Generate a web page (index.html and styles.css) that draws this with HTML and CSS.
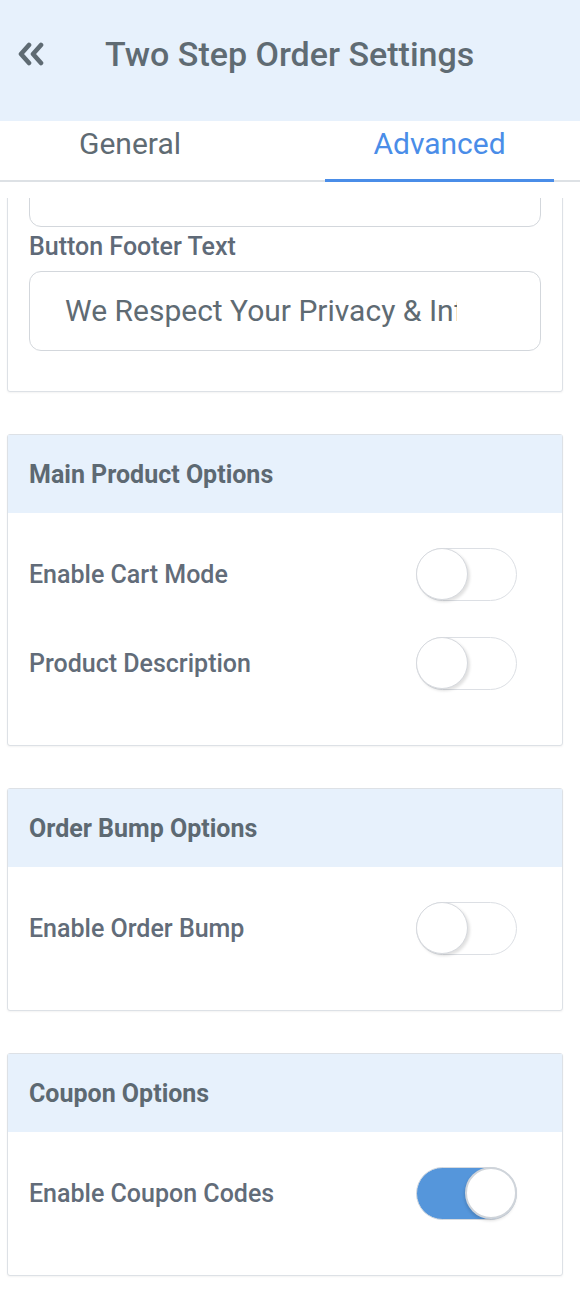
FILE: index.html
```html
<!DOCTYPE html>
<html lang="en">
<head>
<meta charset="utf-8">
<title>Two Step Order Settings</title>
<link rel="stylesheet" href="styles.css">
</head>
<body>
<header class="topbar">
  <svg class="back" viewBox="0 0 28 24" width="28" height="24" aria-hidden="true">
    <polyline points="12,3 4,12 12,21" />
    <polyline points="24,3 16,12 24,21" />
  </svg>
  <h1 class="title">Two Step Order Settings</h1>
</header>
<nav class="tabs">
  <div class="tab">General</div>
  <div class="tab active">Advanced</div>
</nav>
<main class="scroller">
  <section class="card card-first">
    <div class="fields">
      <label class="field-label">Button Text</label>
      <div class="input"><span class="input-text">Place Order Now</span></div>
      <label class="field-label">Button Footer Text</label>
      <div class="input"><span class="input-text">We Respect Your Privacy &amp; Information</span></div>
    </div>
  </section>

  <section class="card">
    <div class="card-head">Main Product Options</div>
    <div class="card-body">
      <div class="row"><span class="row-label">Enable Cart Mode</span><span class="toggle"><span class="knob"></span></span></div>
      <div class="row"><span class="row-label">Product Description</span><span class="toggle"><span class="knob"></span></span></div>
    </div>
  </section>

  <section class="card">
    <div class="card-head">Order Bump Options</div>
    <div class="card-body">
      <div class="row"><span class="row-label">Enable Order Bump</span><span class="toggle"><span class="knob"></span></span></div>
    </div>
  </section>

  <section class="card">
    <div class="card-head">Coupon Options</div>
    <div class="card-body">
      <div class="row"><span class="row-label">Enable Coupon Codes</span><span class="toggle on"><span class="knob"></span></span></div>
    </div>
  </section>
</main>
</body>
</html>
```
FILE: styles.css
```css
* { box-sizing: border-box; }
html, body { margin: 0; padding: 0; }
body {
  width: 580px;
  height: 1294px;
  overflow: hidden;
  background: #ffffff;
  font-family: Roboto, "Liberation Sans", Arial, sans-serif;
  color: #5e6a75;
}

.topbar {
  height: 121px;
  background: #e7f1fc;
  display: flex;
  align-items: center;
  padding-left: 17px;
  padding-bottom: 13px;
}
.back {
  width: 28px;
  height: 24px;
  flex: none;
}
.back polyline {
  fill: none;
  stroke: #5f6b73;
  stroke-width: 4.6;
  stroke-linecap: round;
  stroke-linejoin: round;
}
.title {
  margin: 0 0 0 60px;
  font-size: 34px;
  line-height: 40px;
  font-weight: 500;
  color: #5f6b73;
  white-space: nowrap;
}

.tabs {
  height: 61px;
  display: grid;
  grid-template-columns: 260px 229px;
  column-gap: 65px;
  border-bottom: 2px solid #dde1e5;
}
.tab {
  display: flex;
  align-items: center;
  justify-content: center;
  font-size: 30px;
  line-height: 36px;
  color: #5f6b73;
  padding-bottom: 16px;
  margin-bottom: -2px;
}
.tab.active {
  color: #4a8de8;
  border-bottom: 3px solid #4a8de8;
  padding-bottom: 13px;
}

.scroller {
  margin-top: 16px;
  height: 1097px;
  overflow: hidden;
}

.card {
  margin: 0 17px 42px 7px;
  border: 1px solid #dde1e6;
  border-radius: 3px;
  box-shadow: 0 1px 2px rgba(0, 0, 0, 0.05);
  background: #fff;
}
.card-first {
  margin-top: -110px;
}
.fields {
  padding: 20px 21px 40px;
  display: flex;
  flex-direction: column;
}
.field-label {
  font-size: 25px;
  line-height: 27px;
  font-weight: 500;
  color: #5f6a78;
  margin: 6px 0 11px;
}
.field-label:first-child { margin-top: 0; }
.input {
  height: 80px;
  border: 1.5px solid #d3d7dc;
  border-radius: 12px;
  padding: 0 0 0 35px;
  display: flex;
  align-items: center;
}
.input-text {
  display: block;
  width: 392px;
  overflow: hidden;
  white-space: nowrap;
  font-size: 30px;
  line-height: 36px;
  color: #5f6b73;
}

.card-head {
  height: 78px;
  background: #e7f1fc;
  display: flex;
  align-items: center;
  padding: 0 21px;
  font-size: 25px;
  font-weight: 700;
  color: #5d6972;
}
.card-body {
  padding: 35px 21px 55px;
  display: flex;
  flex-direction: column;
  gap: 36px;
}
.row {
  height: 53px;
  display: flex;
  align-items: center;
  justify-content: space-between;
}
.row-label {
  font-size: 25px;
  font-weight: 500;
  color: #626c79;
}
.toggle {
  position: relative;
  width: 101px;
  height: 53px;
  margin-right: 24px;
  border-radius: 27px;
  border: 1.5px solid #dcdfe4;
  background: #fff;
}
.knob {
  position: absolute;
  left: -1px;
  top: -1px;
  width: 52px;
  height: 52px;
  border-radius: 50%;
  background: #fff;
  border: 1.5px solid #d6d9de;
  box-shadow: 2px 2px 3px rgba(0, 0, 0, 0.12);
}
.toggle.on {
  background: #5596db;
  border-color: #d6dadf;
}
.toggle.on .knob {
  left: auto;
  right: -1px;
  border: 2px solid #cfd4da;
  box-shadow: -1px 2px 3px rgba(0, 0, 0, 0.12);
}
```
